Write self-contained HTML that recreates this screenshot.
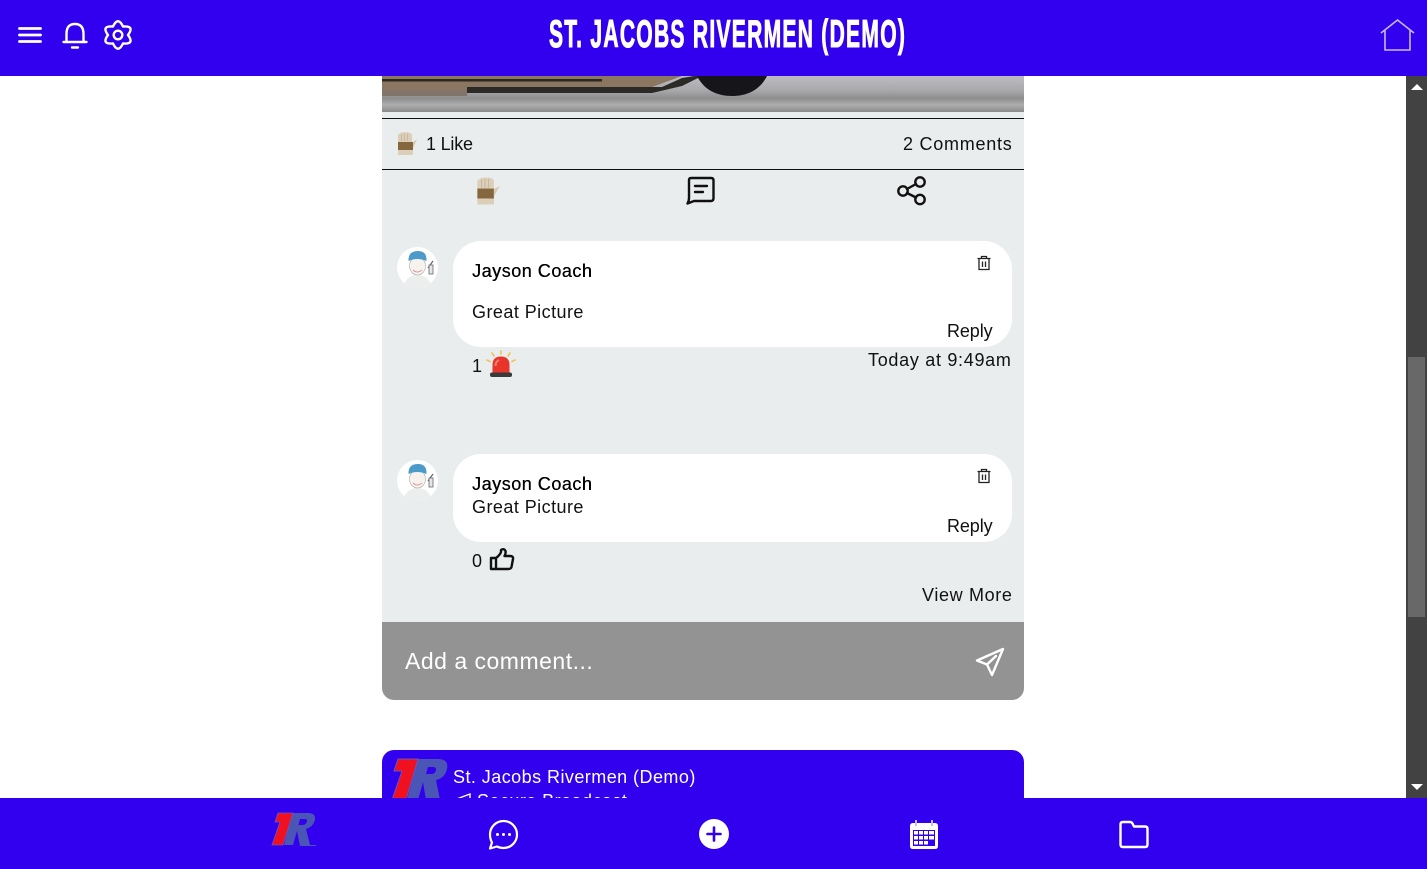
<!DOCTYPE html>
<html lang="en">
<head>
<meta charset="utf-8">
<title>St. Jacobs Rivermen (Demo)</title>
<style>
html,body{margin:0;padding:0;width:1427px;height:869px;overflow:hidden;background:#fff}
body{position:relative;font-family:"Liberation Sans",sans-serif;color:#111;font-size:18px}
.a{position:absolute}
.t{position:absolute;white-space:nowrap;line-height:22px;letter-spacing:.45px}
.b{background:#3200ee}
svg{position:absolute;overflow:visible}
.w{fill:none;stroke:#fff;stroke-width:2.2;stroke-linecap:round;stroke-linejoin:round}
.k{fill:none;stroke:#111;stroke-width:2.4;stroke-linecap:round;stroke-linejoin:round}
.bubble{position:absolute;left:453px;width:559px;background:#fff;border-radius:28px}
</style>
</head>
<body>
<!-- image strip -->
<div class="a" style="left:382px;top:76px;width:642px;height:36px;background:linear-gradient(180deg,#bcbcc2 0,#a9a9ac 40%,#8d8d8e 62%,#aeaeae 80%,#8b8b8b 100%)"></div>
<svg style="left:382px;top:76px" width="642" height="36" viewBox="0 0 642 36">
<path d="M0 0H300L270 11 240 14 0 14Z" fill="#8b7661"/>
<path d="M0 3H220V5.500H0Z" fill="#2c2720"/>
<path d="M85 11H280L300 2 312 0H320L300 10 270 17H85Z" fill="#2b2a27"/>
<path d="M0 14H85V20H0Z" fill="#83746a"/>
<path d="M315 0H385C378 14 365 20 350 20S322 14 315 0Z" fill="#16161a"/>
</svg>
<!-- card -->
<div class="a" style="left:382px;top:112px;width:642px;height:510px;background:#e9eded"></div>
<div class="a" style="left:382px;top:118px;width:642px;height:1px;background:#111"></div>
<div class="a" style="left:382px;top:169px;width:642px;height:1px;background:#111"></div>

<!-- glove small -->
<svg style="left:396px;top:131px" width="22" height="26" viewBox="0 0 22 26">
<path d="M2 4Q3 2 4 3 5 .5 7 1.500 9 .5 10 1.500 12 .5 13 2 15 1.500 16 4V11H2Z" fill="#dccfba"/>
<path d="M5.500 3V10M8.500 2.500V10M11.500 2.500V10" stroke="#c4b49a" stroke-width=".8"/>
<rect x="2" y="11" width="15" height="8" fill="#84663f"/>
<path d="M17 11 21 8.500 17 17Z" fill="#d8c9b2"/>
<rect x="2" y="19" width="15" height="5" fill="#dccfba"/>
</svg>
<div class="t" style="left:426px;top:133px;letter-spacing:-.2px">1 Like</div>
<div class="t" style="left:903px;top:133px;letter-spacing:.75px">2 Comments</div>
<!-- glove big -->
<svg style="left:475px;top:176px" width="26" height="31" viewBox="0 0 22 26">
<path d="M2 4Q3 2 4 3 5 .5 7 1.500 9 .5 10 1.500 12 .5 13 2 15 1.500 16 4V11H2Z" fill="#dccfba"/>
<path d="M5.500 3V10M8.500 2.500V10M11.500 2.500V10" stroke="#c4b49a" stroke-width=".8"/>
<rect x="2" y="10.500" width="14" height="8.500" fill="#84663f"/>
<path d="M16 11 21 8.500 16 17Z" fill="#d8c9b2"/>
<rect x="2" y="19" width="14" height="5" fill="#dccfba"/>
</svg>
<!-- comment icon -->
<svg style="left:686px;top:176px" width="30" height="30" viewBox="0 0 30 30">
<path class="k" d="M5 2H25Q27.500 2 27.500 4.500V22Q27.500 25 25 25H8L1.500 27.500Q3 25 3 22V4.500Q3 2 5 2Z"/>
<path class="k" d="M9 10H21M9 16H17"/>
</svg>
<!-- share icon -->
<svg style="left:897px;top:176px" width="30" height="30" viewBox="0 0 30 30">
<g class="k"><circle cx="6" cy="15" r="4.700"/><circle cx="23" cy="6" r="4.700"/><circle cx="23" cy="23.500" r="4.700"/><path d="M10 13 19 8M10 17 19 21.500"/></g>
</svg>

<!-- avatars -->
<div class="a" style="left:397px;top:247px;width:41px;height:41px;border-radius:50%;background:#fff;overflow:hidden">
<svg style="left:0;top:0" width="41" height="41" viewBox="0 0 41 41">
<path d="M6 41Q9 28 20 28 32 28 35 41Z" fill="#eceeee"/>
<ellipse cx="20.500" cy="19" rx="8" ry="9" fill="#f8f2ee" stroke="#aaa" stroke-width=".6"/>
<path d="M11.500 14Q11 4 21 4 30 4 29.500 14Q20 10 11.500 14Z" fill="#4b9ac9"/>
<path d="M16 23Q20 27 25 23" stroke="#d99" fill="none"/>
<path d="M31 21 36 14" stroke="#666" stroke-width="1.200"/>
<rect x="32" y="18" width="4" height="9" fill="#e6e6e6" stroke="#666" stroke-width=".8"/>
</svg></div>
<div class="a" style="left:397px;top:460px;width:41px;height:41px;border-radius:50%;background:#fff;overflow:hidden">
<svg style="left:0;top:0" width="41" height="41" viewBox="0 0 41 41">
<path d="M6 41Q9 28 20 28 32 28 35 41Z" fill="#eceeee"/>
<ellipse cx="20.500" cy="19" rx="8" ry="9" fill="#f8f2ee" stroke="#aaa" stroke-width=".6"/>
<path d="M11.500 14Q11 4 21 4 30 4 29.500 14Q20 10 11.500 14Z" fill="#4b9ac9"/>
<path d="M16 23Q20 27 25 23" stroke="#d99" fill="none"/>
<path d="M31 21 36 14" stroke="#666" stroke-width="1.200"/>
<rect x="32" y="18" width="4" height="9" fill="#e6e6e6" stroke="#666" stroke-width=".8"/>
</svg></div>

<!-- first comment -->
<div class="bubble" style="top:241px;height:106px"></div>
<div class="t" style="left:472px;top:260px;color:#000;letter-spacing:.52px;text-shadow:.3px 0 0 #000">Jayson Coach</div>
<div class="t" style="left:472px;top:301px">Great Picture</div>
<div class="t" style="left:947px;top:320px;letter-spacing:-.1px">Reply</div>
<svg style="left:976px;top:255px" width="16" height="16" viewBox="0 0 16 16">
<path d="M1.500 3.500H14.500M5.500 3.500V1.500H10.500V3.500M3 3.500V14.500H13V3.500M6.500 6.500V12M9.500 6.500V12" fill="none" stroke="#222" stroke-width="1.300"/>
</svg>
<div class="t" style="left:472px;top:355px">1</div>
<svg style="left:486px;top:350px" width="30" height="28" viewBox="0 0 30 28">
<path d="M15 1V4M6 3 8 6M24 3 22 6M1 10 4 11.500M29 10 26 11.500" stroke="#eec55c" stroke-width="1.700" stroke-linecap="round"/>
<path d="M6.500 24V15Q6.500 6.500 15 6.500T23.500 15V24Z" fill="#e8352b"/>
<path d="M9.500 16Q9.500 11.500 13 10" stroke="#f47f72" stroke-width="2" fill="none"/>
<rect x="4" y="22.500" width="22" height="4.500" rx="2" fill="#3a3a3a"/>
</svg>
<div class="t" style="left:868px;top:349px;letter-spacing:.7px">Today at 9:49am</div>

<!-- second comment -->
<div class="bubble" style="top:454px;height:88px"></div>
<div class="t" style="left:472px;top:473px;color:#000;letter-spacing:.52px;text-shadow:.3px 0 0 #000">Jayson Coach</div>
<div class="t" style="left:472px;top:496px">Great Picture</div>
<div class="t" style="left:947px;top:515px;letter-spacing:-.1px">Reply</div>
<svg style="left:976px;top:468px" width="16" height="16" viewBox="0 0 16 16">
<path d="M1.500 3.500H14.500M5.500 3.500V1.500H10.500V3.500M3 3.500V14.500H13V3.500M6.500 6.500V12M9.500 6.500V12" fill="none" stroke="#222" stroke-width="1.300"/>
</svg>
<div class="t" style="left:472px;top:550px">0</div>
<svg style="left:489px;top:547px" width="26" height="24" viewBox="0 0 26 24">
<path class="k" d="M2 11H7V22H2ZM7 11Q11 8 12 5V3Q15 1 16.500 4Q17 6.500 15.500 9H21Q24.500 9 24 12L22.500 20Q22 22 19 22H7"/>
</svg>
<div class="t" style="left:922px;top:584px;letter-spacing:.65px">View More</div>

<!-- comment bar -->
<div class="a" style="left:382px;top:622px;width:642px;height:78px;background:#939393;border-radius:0 0 12px 12px"></div>
<div class="t" style="left:405px;top:649px;color:#fff;font-size:23px;line-height:24px;letter-spacing:.5px">Add a comment...</div>
<svg style="left:975px;top:647px" width="30" height="30" viewBox="0 0 30 30">
<path class="w" d="M28 2 2 13.500 12 17.500 17 28ZM21 9 12 17.500" style="stroke-width:2.400"/>
</svg>

<!-- next card -->
<div class="a b" style="left:382px;top:750px;width:642px;height:60px;border-radius:12px 12px 0 0"></div>
<svg style="left:390px;top:758px" width="60" height="42" viewBox="0 0 60 42">
<path d="M28 1H48Q59 1 57 11 55 20 46 22L50 42H36L33 24 28 42H17ZM38 9 36 16H42Q46 15 46 11.500 46 9 43 9Z" fill="#4a55b5" fill-rule="evenodd"/>
<path d="M8 1H28L16 42H2L12 13H4Z" fill="#f01020" stroke="#6a55c0" stroke-width="1"/>
</svg>
<div class="t" style="left:453px;top:766px;color:#fff">St. Jacobs Rivermen (Demo)</div>
<svg style="left:453px;top:793px" width="18" height="14" viewBox="0 0 18 14"><path d="M17 1 1 7 17 13Z" fill="none" stroke="#fff" stroke-width="1.400"/></svg>
<div class="t" style="left:477px;top:790px;color:#fff">Secure Broadcast</div>

<!-- scrollbar -->
<div class="a" style="left:1406px;top:76px;width:21px;height:722px;background:#424242"></div>
<div class="a" style="left:1408px;top:357px;width:17px;height:260px;background:#686868"></div>
<div class="a" style="left:1411px;top:84px;width:0;height:0;border-left:6px solid transparent;border-right:6px solid transparent;border-bottom:6px solid #fff"></div>
<div class="a" style="left:1411px;top:784px;width:0;height:0;border-left:6px solid transparent;border-right:6px solid transparent;border-top:6px solid #fff"></div>

<!-- top bar -->
<div class="a b" style="left:0;top:0;width:1427px;height:76px"></div>
<svg style="left:18px;top:27px" width="24" height="16" viewBox="0 0 24 16">
<path d="M1.500 1.500H22.500M1.500 8H22.500M1.500 14.500H22.500" class="w" style="stroke-width:2.800"/>
</svg>
<svg style="left:62px;top:22px" width="26" height="28" viewBox="0 0 26 28">
<path class="w" style="stroke-width:2.400" d="M1.500 20H24.500M4.500 20V12Q4.500 2 13 2T21.500 12V20M10 25.500H16"/>
</svg>
<svg style="left:104px;top:20px" width="28" height="30" viewBox="0 0 28 30">
<path class="w" style="stroke-width:2.400" d="M9 6.500Q14 -4 19 6.500Q31 5.500 24 15Q31 24.500 19 23.500Q14 34 9 23.500Q-3 24.500 4 15Q-3 5.500 9 6.500Z"/>
<circle class="w" style="stroke-width:2.400" cx="14" cy="15" r="4.300"/>
</svg>
<svg style="left:0;top:0" width="1427" height="76" viewBox="0 0 1427 76">
<text transform="translate(549 47) scale(.54 1)" x="0" y="0" font-family="Liberation Sans" font-weight="700" font-size="39" fill="#fff" stroke="#fff" stroke-width="1.100" textLength="659" lengthAdjust="spacing">ST. JACOBS RIVERMEN (DEMO)</text>
</svg>
<svg style="left:1380px;top:19px" width="35" height="33" viewBox="0 0 35 33">
<path d="M1 14 17.500 1 34 14M5 11.500V31H30V11.500" fill="none" stroke="#c9b8f8" stroke-width="1.600"/>
</svg>

<!-- bottom bar -->
<div class="a b" style="left:0;top:798px;width:1427px;height:71px"></div>
<svg style="left:272px;top:812px" width="44" height="34" viewBox="0 0 44 34">
<path d="M20 1H36Q44 1 43 8 41 15 34 17L38 33H44V34H28L25 19 21 33H12ZM28 7 26.500 13H31Q35 12 35 9 35 7 33 7Z" fill="#4a55b5" fill-rule="evenodd"/>
<path d="M6 1H21L11 33H0L8 10H3Z" fill="#f01020" stroke="#6a55c0" stroke-width=".8"/>
</svg>
<svg style="left:488px;top:819px" width="31" height="31" viewBox="0 0 31 31">
<path class="w" d="M15.500 2C23 2 29 8 29 15.500S23 29 15.500 29Q12 29 9 27.500L2 29.500 4 23.500Q2 20 2 15.500C2 8 8 2 15.500 2Z"/>
<circle cx="9.500" cy="15.500" r="1.500" fill="#fff"/><circle cx="15.500" cy="15.500" r="1.500" fill="#fff"/><circle cx="21.500" cy="15.500" r="1.500" fill="#fff"/>
</svg>
<div class="a" style="left:699px;top:819px;width:30px;height:30px;border-radius:50%;background:#fff"></div>
<svg style="left:699px;top:819px" width="30" height="30" viewBox="0 0 30 30">
<path d="M15 8.500V21.500M8.500 15H21.500" stroke="#3200ee" stroke-width="2.600" stroke-linecap="round"/>
</svg>
<svg style="left:909px;top:819px" width="30" height="31" viewBox="0 0 30 31">
<path d="M4 4H26Q29 4 29 7V27Q29 30 26 30H4Q1 30 1 27V7Q1 4 4 4Z" fill="#fff"/>
<path d="M7 1V7M23 1V7" stroke="#c9b8f8" stroke-width="2"/>
<rect x="4" y="11" width="22" height="16" fill="#3200ee"/>
<g fill="#fff">
<rect x="5" y="12" width="4" height="3.500"/><rect x="10" y="12" width="4" height="3.500"/><rect x="15" y="12" width="4" height="3.500"/><rect x="20" y="12" width="5" height="3.500"/>
<rect x="5" y="17" width="4" height="3.500"/><rect x="10" y="17" width="4" height="3.500"/><rect x="15" y="17" width="4" height="3.500"/><rect x="20" y="17" width="5" height="3.500"/>
<rect x="5" y="22" width="4" height="3.500"/><rect x="10" y="22" width="4" height="3.500"/><rect x="15" y="22" width="4" height="3.500"/>
</g>
</svg>
<svg style="left:1119px;top:820px" width="30" height="29" viewBox="0 0 30 29">
<path class="w" style="stroke-width:2.400" d="M4 2H11Q12.500 2 13.500 3.500L15 6.500H26Q28.500 6.500 28.500 9V24.500Q28.500 27 26 27H4Q1.500 27 1.500 24.500V4.500Q1.500 2 4 2Z"/>
</svg>
</body>
</html>
